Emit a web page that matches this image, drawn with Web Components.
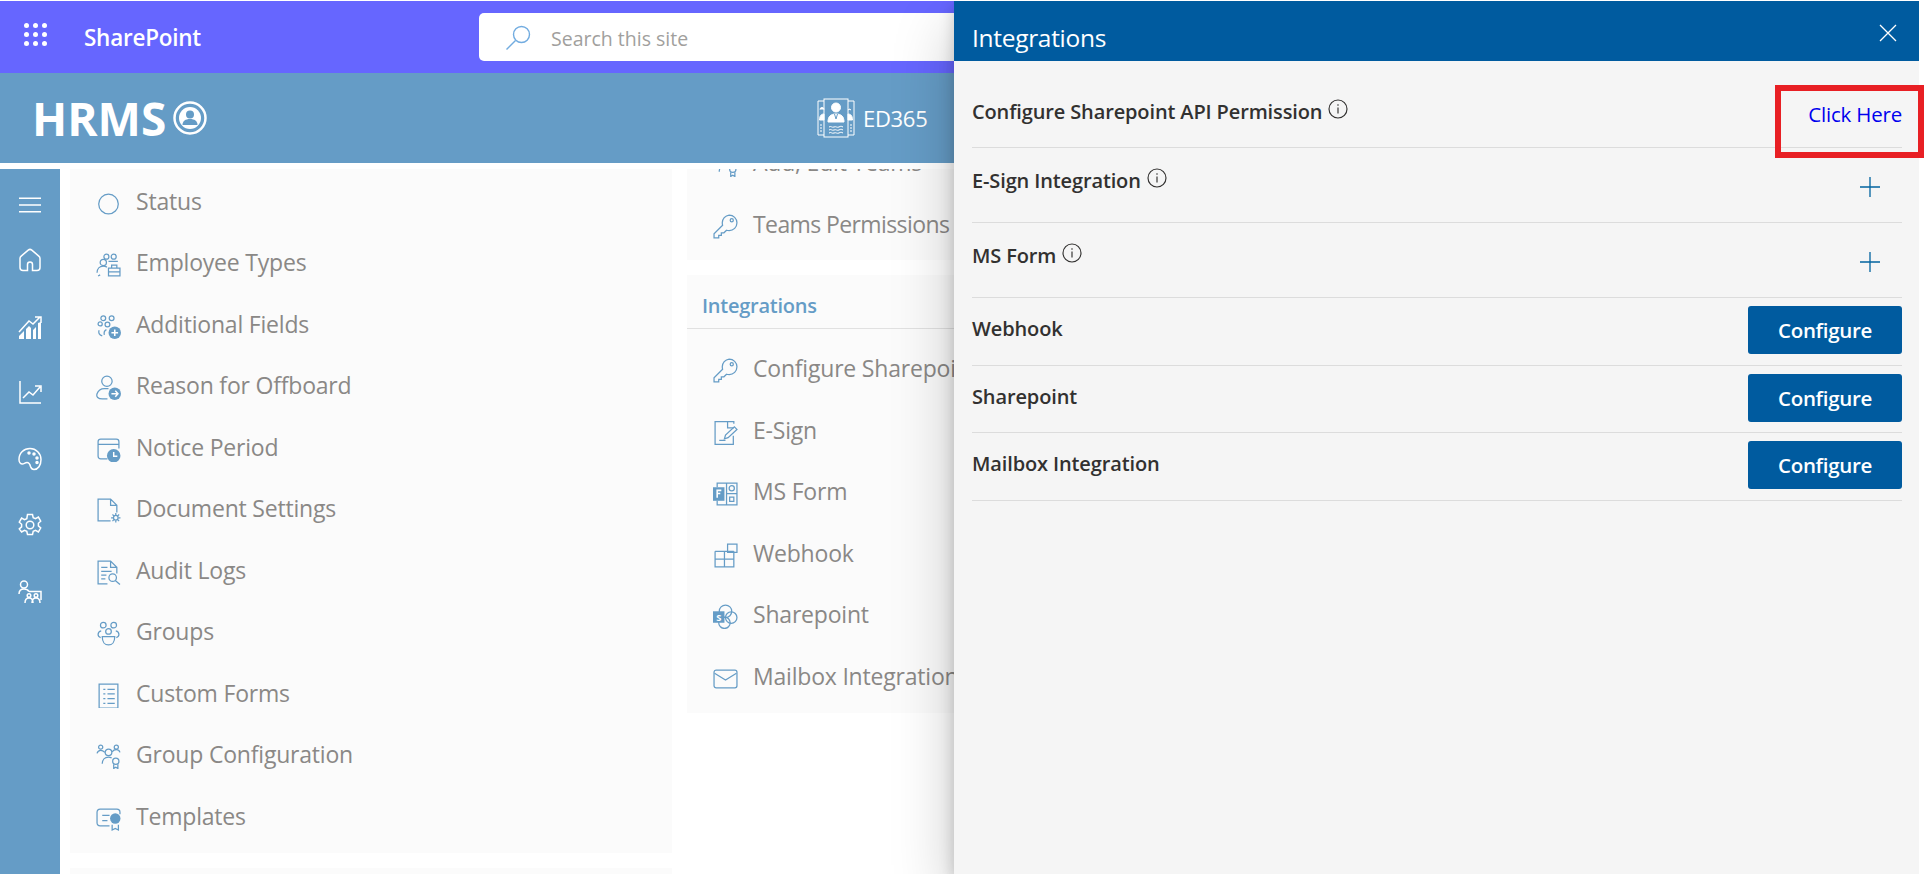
<!DOCTYPE html>
<html lang="en">
<head>
<meta charset="utf-8">
<title>HRMS</title>
<style>
  html, body { margin: 0; height: 100%; background: #fff; overflow: hidden; }
  body { font-family: "Open Sans", "Noto Sans", sans-serif; padding-top: 1px; box-sizing: border-box; }
  hr-page { height: 873px; }
</style>
</head>
<body>
<hr-page></hr-page>
<script>
// icon set, all drawn on a 24x24 box
const ICONS = {
  status: '<circle cx="12" cy="12.500" r="9.400"/>',
  types: '<circle cx="10" cy="4.500" r="2.400"/><circle cx="17" cy="4.500" r="2.400"/><circle cx="7" cy="10" r="3"/><path d="M1 20c0-4 2.500-6.500 6-6.500 1.500 0 2.500.4 3.500 1M4 22l-2 1"/><path d="M12 9h9M12 15.500h11v7.500H12zM12 19h11M15 15.500v-3h5v3"/>',
  fields: '<circle cx="7" cy="4" r="2.300"/><circle cx="15" cy="4" r="2.300"/><circle cx="4" cy="9.500" r="2"/><circle cx="11" cy="10" r="2.300"/><path d="M6 21c-3-1-4-3-3-5.500M10 15c-2 1-2.500 3-2 5"/><circle cx="18" cy="18" r="6" fill="#659cc6" stroke="none"/><path d="M18 14.800v6.400M14.800 18h6.400" stroke="#fff" stroke-width="1.500"/>',
  offboard: '<circle cx="10.500" cy="6" r="5"/><path d="M11 23H6c-4 0-6-2-5-5 1-3 4-5 7-5h4"/><circle cx="18" cy="18" r="6" fill="#659cc6" stroke="none"/><path d="M14.800 18h6M18.500 15.200l2.600 2.800-2.600 2.800" stroke="#fff" stroke-width="1.400"/>',
  notice: '<path d="M11 21H4.500C3 21 2 20 2 18.500V4.500C2 3 3 2 4.500 2h15C21 2 22 3 22 4.500V11M2 7h20"/><circle cx="17" cy="18" r="6.500" fill="#659cc6" stroke="none"/><path d="M17 14.500V18.500h3.500" stroke="#fff" stroke-width="1.400"/>',
  docset: '<path d="M14 22H2V1h12l6 6v7M14 1v6h6"/><circle cx="19" cy="19" r="2.200"/><path d="M19 14.500v2M19 21.500v2M14.500 19h2M21.500 19h2M15.800 15.800l1.400 1.400M20.800 20.800l1.400 1.400M15.800 22.200l1.400-1.400M20.800 17.200l1.400-1.400"/>',
  audit: '<path d="M11 23H2V1h12l6 6v6M14 1v6h6M5 7h6M5 11h10M5 14.500h5M5 18h4"/><circle cx="16" cy="17" r="3.600"/><path d="M18.500 19.700l4.500 3.800"/>',
  groups: '<circle cx="7" cy="4" r="2.700"/><circle cx="17" cy="4" r="2.700"/><circle cx="12" cy="10" r="2.700"/><path d="M5 9.500C2.500 10 2 11.500 2 13c0 1.500 1 2.500 2.500 3M19 9.500c2.500.5 3 2 3 3.500 0 1.500-1 2.500-2.500 3M6 15h12c0 5-2.500 8-6 8s-6-3-6-8z"/>',
  forms: '<path d="M3 1h18v23H3zM7 6h2M11 6h7M7 10.500h2M11 10.500h7M7 15h2M11 15h7M7 19.500h2M11 19.500h7"/>',
  groupcfg: '<circle cx="4.500" cy="3" r="2"/><circle cx="12" cy="8" r="3.200"/><circle cx="19.500" cy="3" r="2"/><circle cx="19" cy="16.500" r="3"/><path d="M1 9c.5-2 2-3 3.500-3 2 0 3 1 4 2M23 8c-.5-1.500-2-2.500-3.500-2.500-1.500 0-3 .6-4 2M6 19c0-4 2.500-6.500 6-6.500 1.200 0 2 .3 3 .8M17 19.500v4l2-1.200 2 1.200v-4"/>',
  templates: '<path d="M13 19H4c-2 0-3-1-3-3V6c0-2 1-3 3-3h16c2 0 3 1 3 3v2M6 9h7M6 14h5"/><circle cx="18.500" cy="12" r="5" fill="#659cc6" stroke="none"/><path d="M15.500 18v5l3-1.500 3 1.500v-5"/>',
  key: '<path d="M15.500 1a7.500 7.500 0 0 1 0 15c-.9 0-1.800-.2-2.500-.4L10.500 18H8v2.500H5.500V23H1v-4l8.200-8.200c-.2-.7-.3-1.400-.3-2.300A7.500 7.500 0 0 1 15.500 1z"/><circle cx="18" cy="6" r="1.500"/>',
  esign: '<path d="M20 3.500V1.500H2v22h17.500V15M14 1.500v6h6M6 19.500h6"/><path d="M11 18l1-3.500 8.500-8 2.500 2.500-8.500 8z"/>',
  msform: '<path d="M4 6V2h19v21H4v-4M13 12h10M13 2v21"/><circle cx="18" cy="7" r="2.500"/><path d="M16 15.500h4v4h-4z"/><rect x="0" y="6" width="11" height="13" fill="#659cc6" stroke="none"/><path d="M4 16v-7h4M4 12h3" stroke="#fff" stroke-width="1.500"/>',
  webhook: '<path d="M2 8h18M2 8v15h18V8M11 8v15M2 15.500h18M14 1h9v8h-9z"/>',
  sharepoint: '<circle cx="12" cy="7" r="6"/><circle cx="17.500" cy="13" r="5.500"/><circle cx="11" cy="18" r="5.500"/><rect x="0" y="7" width="11" height="11" fill="#659cc6" stroke="none"/><text x="5.500" y="16" font-size="9" font-weight="700" text-anchor="middle" fill="#fff" stroke="none" font-family="Open Sans, sans-serif">S</text>',
  mail: '<rect x="1" y="4" width="22" height="17" rx="2"/><path d="M1.500 7L12 13.500 22.500 7"/>',
  menu: '<path d="M1 5.300h22M1 12h22M1 18.700h22"/>',
  home: '<path d="M9.500 22.500H5c-2 0-3-1-3-3V10.500c0-1 .5-1.800 1.200-2.400l7-6c1-.8 2.600-.8 3.600 0l7 6c.7.600 1.200 1.400 1.200 2.400v9c0 2-1 3-3 3h-4.500v-6c0-1.400-1-2.500-2.500-2.500s-2.500 1.100-2.500 2.500z"/>',
  bars: '<path d="M1 23v-3l5-5v8zM8 23V13l3-3 2 2v11zM15 23v-9l3-3v12zM20 23V7l3-1v17z" fill="#fff" stroke="none"/><path d="M1 16L11 5l4 3 7-7M17 1h6v6"/>',
  trend: '<path d="M2 1v22h21M5 18l6-6 4 3 7-8M17 6h6v6"/>',
  palette: '<path d="M12 1.500c6 0 11 5 11 11 0 6-3 10-7 10-2.500 0-3-1.500-3.500-3-.5-2-1-4-3.500-4-2 0-3 1.500-4.500 1.500C2.500 17 1 15 1 12.500 1 6 6 1.500 12 1.500z"/><circle cx="11" cy="6" r="1" fill="#fff"/><circle cx="16" cy="7" r="1" fill="#fff"/><circle cx="19" cy="11" r="1" fill="#fff"/><circle cx="19" cy="15.500" r="1" fill="#fff"/>',
  gear: '<circle cx="12" cy="12" r="3.800"/><path d="M9.500 1.500h5l.7 3.200 2.300 1 2.900-1.600 2.300 4.100-2.300 2.100v2.500l2.300 2.100-2.300 4.100-2.900-1.600-2.300 1-.7 3.200h-5l-.7-3.200-2.300-1-2.900 1.600L1.300 15.900l2.300-2.100v-2.500L1.300 9.200l2.300-4.100 2.900 1.600 2.300-1z"/>',
  people: '<circle cx="6" cy="4.500" r="3.500"/><path d="M1 14c0-3 2-5 5-5 2 0 4 1 5 2.500M11 11.500h12V20"/><circle cx="11" cy="15.500" r="1.800"/><circle cx="18" cy="15.500" r="1.800"/><path d="M7 23c0-3 1.500-5 4-5s4 2 4 5M14 23c0-3 1.500-5 4-5s4 2 4 5"/>'
};
const svgIcon = (name, size, stroke, width) =>
  `<svg viewBox="0 0 24 24" width="${size}" height="${size}" fill="none" stroke="${stroke}" stroke-width="${width}" aria-hidden="true">${ICONS[name]}</svg>`;

class NavItem extends HTMLElement {
  constructor() {
    super();
    this.attachShadow({ mode: 'open' });
    this.shadowRoot.innerHTML = `
      <style>
        :host { display: flex; align-items: center; height: 61.500px; padding-left: 26px; white-space: nowrap; }
        svg { flex: none; display: block; margin-top: 4px; }
        .label { margin-left: 15px; font-size: 23px; color: #8a8886; letter-spacing: var(--label-spacing, -.2px); margin-top: -1px; }
      </style>
      ${svgIcon(this.getAttribute('icon'), 25, '#659cc6', 1.2)}
      <span class="label"><slot></slot></span>
    `;
  }
}
customElements.define('nav-item', NavItem);

class SettingsCard extends HTMLElement {
  constructor() {
    super();
    this.attachShadow({ mode: 'open' });
    this.shadowRoot.innerHTML = `
      <style>
        :host { display: block; background: #fbfbfb; overflow: hidden; }
      </style>
      <slot></slot>
    `;
  }
}
customElements.define('settings-card', SettingsCard);

class SideRail extends HTMLElement {
  constructor() {
    super();
    this.attachShadow({ mode: 'open' });
    // the rail icons are not evenly spaced in the app
    const items = [['menu', 24], ['home', 31], ['bars', 44], ['trend', 40], ['palette', 43], ['gear', 42], ['people', 43]];
    this.shadowRoot.innerHTML = `
      <style>
        :host { display: flex; flex-direction: column; align-items: center; width: 60px; flex: none; background: #659cc6; }
        svg { display: block; flex: none; }
      </style>
      ${items.map(([n, gap]) => svgIcon(n, 24, '#fff', 1.5).replace('<svg ', `<svg style="margin-top:${gap}px" `)).join('')}
    `;
  }
}
customElements.define('side-rail', SideRail);

class SuiteBar extends HTMLElement {
  constructor() {
    super();
    this.attachShadow({ mode: 'open' });
    let dots = '';
    for (let i = 0; i < 9; i++) dots += '<i></i>';
    this.shadowRoot.innerHTML = `
      <style>
        :host { display: flex; align-items: center; height: 72px; background: #6666ff; color: #fff; flex: none; }
        .waffle { display: grid; grid-template-columns: repeat(3, 5px); gap: 4px; margin: -5px 0 0 24px; }
        i { width: 5px; height: 5px; border-radius: 50%; background: #fff; }
        .name { margin-left: 37px; width: 395px; font-size: 22.500px; font-weight: 600; letter-spacing: -.25px; margin-top: 1px; }
        .search { display: flex; align-items: center; width: 560px; height: 48px; background: #fff; border-radius: 5px; color: #a19f9d; font-size: 19.500px; }
        .search span { margin-top: 2px; }
        svg { margin: 2px 20px 0 26px; }
      </style>
      <div class="waffle">${dots}</div>
      <div class="name">SharePoint</div>
      <div class="search">
        <svg viewBox="0 0 26 26" width="26" height="26" fill="none" stroke="#72ace0" stroke-width="1.400"><circle cx="16.500" cy="9.500" r="8"/><path d="M10.500 15.500L1.500 24.500"/></svg>
        <span>Search this site</span>
      </div>
    `;
  }
}
customElements.define('suite-bar', SuiteBar);

class BrandBar extends HTMLElement {
  constructor() {
    super();
    this.attachShadow({ mode: 'open' });
    this.shadowRoot.innerHTML = `
      <style>
        :host { display: flex; align-items: center; height: 90px; background: #659cc6; color: #fff; flex: none; }
        .logo { margin-left: 32px; font-size: 46px; font-weight: 700; line-height: 1; width: 141px; }
        .mark { width: 644px; flex: none; }
        .mark svg { display: block; }
        .site { display: flex; align-items: center; gap: 8px; font-size: 22px; letter-spacing: -.3px; }
        .site svg { display: block; }
      </style>
      <div class="logo">HRMS</div>
      <div class="mark">
        <svg viewBox="0 0 34 34" width="34" height="34" fill="none" stroke="#fff">
          <circle cx="17" cy="17" r="15.500" stroke-width="2.500"/>
          <circle cx="17" cy="17" r="11" fill="#fff" stroke="none"/>
          <circle cx="17" cy="13.500" r="4" fill="#659cc6" stroke="none"/>
          <path d="M9.500 24c0-4 3-6 7.500-6s7.500 2 7.500 6z" fill="#659cc6" stroke="none"/>
        </svg>
      </div>
      <div class="site">
        <svg viewBox="0 0 38 40" width="38" height="40" fill="none" stroke="#fff" stroke-width="1">
          <path d="M7 3H1v34h6M31 3h6v34h-6"/>
          <rect x="7" y="1" width="24" height="38"/>
          <circle cx="19" cy="9.500" r="4.500" fill="#fff"/>
          <path d="M11 24c0-6 3-8 8-8s8 2 8 8z" fill="#fff"/>
          <path d="M17.500 16l1.500 5 1.500-5" stroke="#659cc6"/>
          <path d="M12 29c2-1.500 3 1 5 0s3 1 5 0 2-1 4 0M12 32c2-1.500 3 1 5 0s3 1 5 0 2-1 4 0M12 35c2-1.500 3 1 5 0s3 1 5 0 2-1 4 0"/>
          <path d="M3 11.500a2 2 0 0 1 4 0M2.500 22c0-4 1.500-6 4.500-6v6zM31 12a2 2 0 0 1 3 0M35.500 22c0-4-1.500-6-4.500-6v6z" fill="#fff"/>
          <path d="M3 27h2M3 30h2M3 33h2M33 27h2M33 30h2M33 33h2"/>
        </svg>
        <span>ED365</span>
      </div>
    `;
  }
}
customElements.define('brand-bar', BrandBar);

class InfoRow extends HTMLElement {
  constructor() {
    super();
    this.attachShadow({ mode: 'open' });
    this.shadowRoot.innerHTML = `
      <style>
        :host { display: flex; justify-content: space-between; align-items: center; height: var(--row-h, 67px); border-bottom: 1px solid #dcdcdc; }
        .title { display: flex; align-items: flex-start; gap: 6px; font-size: 20px; font-weight: 600; color: #323130; letter-spacing: -.13px; margin: var(--title-top, 0) 0 var(--title-bottom, 6px); }
        svg { display: block; margin-top: 1px; flex: none; }
      </style>
      <div class="title">
        <span>${this.getAttribute('label')}</span>
        ${this.hasAttribute('info') ? `<svg viewBox="0 0 20 20" width="20" height="20" fill="none" stroke="#323130" stroke-width="1.150"><circle cx="10" cy="10" r="9"/><path d="M10 8.500v6M10 5.200v1.600"/></svg>` : ''}
      </div>
      <slot></slot>
    `;
  }
}
customElements.define('info-row', InfoRow);

class ConfigureButton extends HTMLElement {
  constructor() {
    super();
    this.attachShadow({ mode: 'open' });
    this.shadowRoot.innerHTML = `
      <style>
        :host { display: flex; align-items: center; justify-content: center; flex: none; width: 154px; height: 48px; margin-bottom: 3px; background: #005b9f; color: #fff; border-radius: 3px; font-size: 20.500px; font-weight: 600; letter-spacing: -.3px; }
      </style>
      <slot></slot>
    `;
  }
}
customElements.define('configure-button', ConfigureButton);

class PlusButton extends HTMLElement {
  constructor() {
    super();
    this.attachShadow({ mode: 'open' });
    this.shadowRoot.innerHTML = `
      <style>
        :host { display: block; flex: none; width: 20px; height: 20px; margin: 3px 22px 0 0; }
        svg { display: block; }
      </style>
      <svg viewBox="0 0 20 20" width="20" height="20" stroke="#00639f" stroke-width="1.300"><path d="M10 0v20M0 10h20"/></svg>
    `;
  }
}
customElements.define('plus-button', PlusButton);

class IntegrationsPanel extends HTMLElement {
  constructor() {
    super();
    this.attachShadow({ mode: 'open' });
    this.shadowRoot.innerHTML = `
      <style>
        :host { position: absolute; left: 954px; top: 1px; width: 965px; height: 873px; background: #f5f5f5; box-shadow: 0 25.600px 57.600px rgba(0,0,0,.22), 0 4.800px 14.400px rgba(0,0,0,.18); clip-path: inset(0 0 0 -120px); display: flex; flex-direction: column; }
        header { display: flex; align-items: center; justify-content: space-between; height: 60px; flex: none; background: #005b9f; color: #fff; padding: 0 22px 0 18px; font-size: 24.500px; letter-spacing: -.3px; }
        header span { margin-top: 12px; }
        header svg { display: block; margin-top: 4px; }
        .body { padding: 0 17px 0 18px; }
      </style>
      <header>
        <span>Integrations</span>
        <svg viewBox="0 0 18 18" width="18" height="18" stroke="#fff" stroke-width="1.300"><path d="M1 1l16 16M17 1L1 17"/></svg>
      </header>
      <div class="body"><slot></slot></div>
    `;
  }
}
customElements.define('integrations-panel', IntegrationsPanel);

// red annotation from the documentation screenshot
class CalloutBox extends HTMLElement {
  constructor() {
    super();
    this.attachShadow({ mode: 'open' });
    this.shadowRoot.innerHTML = `
      <style>
        :host { position: absolute; left: 1775px; top: 85px; width: 149px; height: 73px; border: 6px solid #e81f24; box-sizing: border-box; }
      </style>
    `;
  }
}
customElements.define('callout-box', CalloutBox);

class HrPage extends HTMLElement {
  constructor() {
    super();
    this.attachShadow({ mode: 'open' });
    this.shadowRoot.innerHTML = `
      <style>
        :host { display: flex; flex-direction: column; width: 1919px; overflow: hidden; color: #323130; }
        .content { display: flex; flex: 1; min-height: 0; margin-top: 6px; }
        .col { overflow: hidden; flex: none; }
        .left { width: 602px; margin-left: 10px; }
        .right { width: 620px; margin-left: 15px; }
        .stack { display: flex; flex-direction: column; gap: 15px; }
        .shift { margin-top: -37px; }
        .end { height: 40px; }
        .head { display: flex; align-items: center; height: 54px; box-sizing: border-box; padding: 8px 0 0 15px; border-bottom: 1px solid #e1e1e1; }
        .head span { font-size: 20px; font-weight: 600; color: #659cc6; letter-spacing: -.25px; }
        .left-cards settings-card:first-child { height: 684px; }
        .teams { height: 128px; }
        .ints { height: 438px; }
        .ints .head + nav-item { margin-top: 9px; }
      </style>
      <suite-bar></suite-bar>
      <brand-bar></brand-bar>
      <div class="content">
        <side-rail></side-rail>
        <div class="col left">
          <div class="stack left-cards">
            <settings-card>
              <div style="height:1.500px"></div>
              <nav-item icon="status">Status</nav-item>
              <nav-item icon="types">Employee Types</nav-item>
              <nav-item icon="fields">Additional Fields</nav-item>
              <nav-item icon="offboard">Reason for Offboard</nav-item>
              <nav-item icon="notice">Notice Period</nav-item>
              <nav-item icon="docset">Document Settings</nav-item>
              <nav-item icon="audit">Audit Logs</nav-item>
              <nav-item icon="groups">Groups</nav-item>
              <nav-item icon="forms">Custom Forms</nav-item>
              <nav-item icon="groupcfg">Group Configuration</nav-item>
              <nav-item icon="templates">Templates</nav-item>
            </settings-card>
            <settings-card class="end"></settings-card>
          </div>
        </div>
        <div class="col right">
          <div class="stack shift">
            <settings-card class="teams">
              <nav-item icon="groupcfg">Add, Edit Teams</nav-item>
              <nav-item icon="key" style="--label-spacing:-.6px">Teams Permissions</nav-item>
            </settings-card>
            <settings-card class="ints">
              <div class="head"><span>Integrations</span></div>
              <nav-item icon="key">Configure Sharepoint API Permission</nav-item>
              <nav-item icon="esign">E-Sign</nav-item>
              <nav-item icon="msform">MS Form</nav-item>
              <nav-item icon="webhook">Webhook</nav-item>
              <nav-item icon="sharepoint">Sharepoint</nav-item>
              <nav-item icon="mail">Mailbox Integration</nav-item>
            </settings-card>
          </div>
        </div>
      </div>
      <integrations-panel>
        <info-row info label="Configure Sharepoint API Permission" style="--row-h:86px;--title-top:14px;--title-bottom:0"><a style="color:#0000ee;font-size:20.500px;letter-spacing:-.2px;margin-top:20px">Click Here</a></info-row>
        <info-row info label="E-Sign Integration" style="--row-h:74px;--title-bottom:10px"><plus-button></plus-button></info-row>
        <info-row info label="MS Form" style="--row-h:74px;--title-bottom:10px"><plus-button></plus-button></info-row>
        <info-row label="Webhook"><configure-button>Configure</configure-button></info-row>
        <info-row label="Sharepoint" style="--row-h:66px"><configure-button>Configure</configure-button></info-row>
        <info-row label="Mailbox Integration"><configure-button>Configure</configure-button></info-row>
      </integrations-panel>
      <callout-box></callout-box>
    `;
  }
}
customElements.define('hr-page', HrPage);
</script>
</body>
</html>
